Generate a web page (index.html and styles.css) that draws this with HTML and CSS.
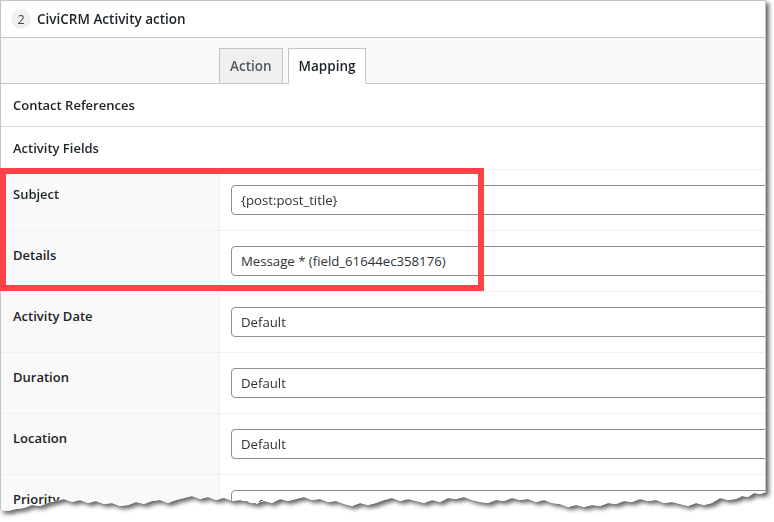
FILE: index.html
```html
<!DOCTYPE html>
<html lang="en">
<head>
    <meta charset="UTF-8">
    <title>CiviCRM Activity action</title>
    <link rel="stylesheet" href="styles.css">
</head>
<body>
    <div class="page">
        <div class="shadow-wrap">
            <div class="panel">
                <div class="panel-header">
                    <span class="step-number">2</span>
                    <h2 class="panel-title">CiviCRM Activity action</h2>
                </div>

                <div class="tab-bar">
                    <a class="tab">Action</a>
                    <a class="tab active">Mapping</a>
                </div>

                <div class="section-row">Contact References</div>
                <div class="section-row last">Activity Fields</div>

                <div class="field-row">
                    <div class="field-label">Subject</div>
                    <div class="field-value"><input class="field-input" type="text" value="{post:post_title}"></div>
                </div>
                <div class="field-row">
                    <div class="field-label">Details</div>
                    <div class="field-value"><input class="field-input" type="text" value="Message * (field_61644ec358176)"></div>
                </div>
                <div class="field-row">
                    <div class="field-label">Activity Date</div>
                    <div class="field-value"><input class="field-input" type="text" value="Default"></div>
                </div>
                <div class="field-row">
                    <div class="field-label">Duration</div>
                    <div class="field-value"><input class="field-input" type="text" value="Default"></div>
                </div>
                <div class="field-row">
                    <div class="field-label">Location</div>
                    <div class="field-value"><input class="field-input" type="text" value="Default"></div>
                </div>
                <div class="field-row">
                    <div class="field-label">Priority</div>
                    <div class="field-value"><input class="field-input" type="text" value="Default"></div>
                </div>
            </div>
        </div>

        <!-- highlight around the edited fields -->
        <div class="highlight"></div>
    </div>
</body>
</html>
```

FILE: styles.css
```css
body {
    margin: 0;
    background-color: #fff;
    font-family: "Open Sans", "Noto Sans", sans-serif;
    font-size: 13px;
    color: #1d2327;
}
.page {
    position: relative;
    width: 774px;
    height: 522px;
    overflow: hidden;
}
.shadow-wrap {
    width: 766px;
    filter: drop-shadow(3px 3px 2px rgba(0, 0, 0, 0.6));
}
.panel {
    box-sizing: border-box;
    width: 766px;
    height: 516px;
    background-color: #fff;
    border: 1px solid #c3c4c7;
    border-bottom: none;
    overflow: hidden;
    clip-path: polygon(0 0, 766px 0, 766px 492px, 760px 494px, 754px 493px, 748px 497px, 742px 496px, 736px 499px,
        728px 500px, 720px 498px, 712px 503px, 704px 505px, 696px 503px, 688px 506px, 680px 504px, 672px 502px,
        664px 503px, 656px 500px, 648px 501px, 640px 499px, 632px 502px, 624px 501px, 616px 504px, 608px 503px,
        600px 506px, 592px 505px, 584px 507px, 576px 505px, 568px 507px, 560px 504px, 552px 503px, 544px 500px,
        536px 502px, 528px 499px, 520px 500px, 512px 498px, 504px 501px, 496px 500px, 488px 503px, 480px 502px,
        472px 500px, 464px 497px, 456px 499px, 448px 498px, 440px 502px, 432px 500px, 424px 503px, 416px 501px,
        408px 499px, 400px 501px, 392px 498px, 384px 500px, 376px 503px, 368px 505px, 360px 503px, 352px 506px,
        344px 504px, 336px 501px, 328px 502px, 320px 499px, 312px 500px, 304px 497px, 296px 499px, 288px 501px,
        280px 499px, 272px 503px, 264px 501px, 256px 504px, 248px 502px, 240px 500px, 232px 501px, 224px 498px,
        216px 500px, 208px 497px, 200px 499px, 192px 496px, 184px 498px, 176px 500px, 168px 503px, 160px 500px,
        152px 501px, 144px 504px, 136px 502px, 128px 505px, 120px 506px, 112px 503px, 104px 504px, 96px 501px,
        88px 503px, 80px 500px, 72px 502px, 64px 499px, 56px 501px, 48px 503px, 40px 506px, 32px 505px,
        24px 508px, 16px 509px, 8px 511px, 0 510px);
}
.panel-header {
    display: flex;
    align-items: center;
    gap: 6px;
    height: 36px;
    padding-left: 10px;
    border-bottom: 1px solid #c3c4c7;
}
.step-number {
    flex: none;
    display: flex;
    align-items: center;
    justify-content: center;
    width: 20px;
    height: 20px;
    border-radius: 50%;
    background-color: #f0f0f1;
    color: #3c434a;
    font-size: 12.5px;
}
.panel-title {
    margin: 0;
    font-size: 13.5px;
    font-weight: 600;
    color: #1d2327;
}
.tab-bar {
    display: flex;
    gap: 5px;
    height: 35px;
    padding: 10px 0 0 218px;
    background-color: #f9f9f9;
    border-bottom: 1px solid #c3c4c7;
}
.tab {
    box-sizing: border-box;
    height: 36px;
    padding: 0 10px;
    line-height: 34px;
    font-size: 13.5px;
    font-weight: 600;
    color: #50575e;
    background-color: #f0f0f1;
    border: 1px solid #c3c4c7;
}
.tab.active {
    color: #1d2327;
    background-color: #fff;
    border-bottom-color: #fff;
}
.section-row {
    height: 42px;
    padding-left: 12px;
    line-height: 42px;
    font-weight: 600;
    border-bottom: 1px solid #dcdcde;
}
.section-row.last {
    border-bottom-color: #f0f0f1;
}
.field-row {
    display: flex;
    height: 60px;
    border-bottom: 1px solid #f0f0f1;
}
.field-label {
    box-sizing: border-box;
    width: 219px;
    padding: 14px 12px;
    line-height: 20px;
    font-weight: 600;
    background-color: #f9f9f9;
    border-right: 1px solid #f0f0f1;
}
.field-value {
    flex: 1;
    padding: 15px 0 0 11px;
    overflow: hidden;
}
.field-input {
    box-sizing: border-box;
    width: 600px;
    height: 30px;
    padding: 0 9px;
    font-family: inherit;
    font-size: 13.2px;
    color: #2c3338;
    background-color: #fff;
    border: 1px solid #8c8f94;
    border-radius: 4px;
}
.highlight {
    position: absolute;
    left: 0;
    top: 168px;
    width: 484px;
    height: 123px;
    box-sizing: border-box;
    border: 6px solid #fd4347;
}
```
